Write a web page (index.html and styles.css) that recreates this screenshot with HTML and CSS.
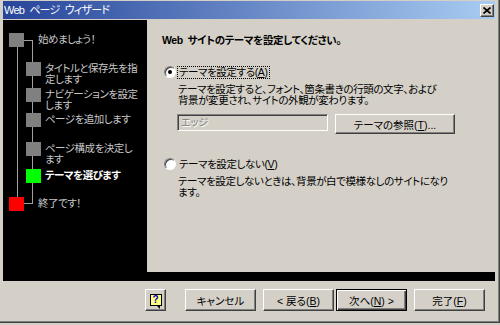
FILE: index.html
```html
<!DOCTYPE html>
<html lang="ja">
<head>
    <meta charset="UTF-8">
    <meta name="viewport" content="width=device-width, initial-scale=1.0">
    <title>Web ページ ウィザード</title>
    <link rel="stylesheet" href="styles.css">
</head>
<body>
    <div class="window">
        <div class="titlebar">
            <span class="title">Web ページ ウィザード</span>
            <button class="close-btn">
                <svg width="8" height="7" viewBox="0 0 8 7"><path d="M0.5 0.5L7.5 6.5M7.5 0.5L0.5 6.5" stroke="#000" stroke-width="1.7"/></svg>
            </button>
        </div>

        <div class="main">
            <div class="steps">
                <div class="tree-line outer"></div>
                <div class="tree-line inner"></div>
                <ul class="step-list">
                    <li class="step top"><span class="box"></span><span class="label">始めましょう！</span></li>
                    <li class="step sub"><span class="box"></span><span class="label">タイトルと保存先を指<br>定します</span></li>
                    <li class="step sub"><span class="box"></span><span class="label">ナビゲーションを設定<br>します</span></li>
                    <li class="step sub"><span class="box"></span><span class="label">ページを追加します</span></li>
                    <li class="step sub"><span class="box"></span><span class="label">ページ構成を決定し<br>ます</span></li>
                    <li class="step sub current"><span class="box green"></span><span class="label">テーマを選びます</span></li>
                    <li class="step top"><span class="box red"></span><span class="label">終了です！</span></li>
                </ul>
            </div>

            <div class="content">
                <h1 class="heading">Web サイトのテーマを設定してください。</h1>

                <label class="radio-row first">
                    <span class="radio checked"></span>
                    <span class="radio-text focused">テーマを設定する(<u>A</u>)</span>
                </label>
                <p class="desc">テーマを設定すると、フォント、箇条書きの行頭の文字、および<br>背景が変更され、サイトの外観が変わります。</p>

                <div class="theme-row">
                    <div class="textbox">エッジ</div>
                    <button class="btn browse">テーマの参照(<u>T</u>)...</button>
                </div>

                <label class="radio-row second">
                    <span class="radio"></span>
                    <span class="radio-text">テーマを設定しない(<u>V</u>)</span>
                </label>
                <p class="desc">テーマを設定しないときは、背景が白で模様なしのサイトになり<br>ます。</p>
            </div>
        </div>

        <div class="footer">
            <button class="btn help"><span class="help-icon">?</span></button>
            <button class="btn">キャンセル</button>
            <div class="nav-group">
                <button class="btn">&lt; 戻る(<u>B</u>)</button>
                <button class="btn default">次へ(<u>N</u>) &gt;</button>
            </div>
            <button class="btn">完了(<u>F</u>)</button>
        </div>
    </div>
</body>
</html>
```

FILE: styles.css
```css
* {
    margin: 0;
    padding: 0;
    box-sizing: border-box;
}

body {
    background-color: #d4d0c8;
    font-family: "Liberation Sans", "Noto Sans CJK JP", sans-serif;
    font-size: 10.5px;
    font-feature-settings: "palt";
    color: #000;
}

.window {
    width: 500px;
    height: 323px;
    padding: 1px 4px 0 3px;
    border-right: 1px solid #404040;
    border-bottom: 1px solid #404040;
    box-shadow: inset -1px -1px #808080;
    display: flex;
    flex-direction: column;
}

.titlebar {
    height: 18px;
    margin-bottom: 1px;
    padding: 0 1px 0 1px;
    display: flex;
    align-items: center;
    justify-content: space-between;
    background: linear-gradient(to right, #26449a, #a8ccf2);
    color: #fff;
}

.title {
    font-size: 11px;
    letter-spacing: -0.8px;
    word-spacing: 3px;
    line-height: 18px;
}

.close-btn {
    width: 14px;
    height: 13px;
    display: flex;
    align-items: center;
    justify-content: center;
    background-color: #d4d0c8;
    border: 1px solid;
    border-color: #fff #404040 #404040 #fff;
    box-shadow: inset -1px -1px #808080;
}

.main {
    height: 261px;
    display: flex;
    background-color: #000;
    padding-bottom: 9px;
}

/* step tree on the left */
.steps {
    width: 144px;
    position: relative;
    padding-top: 13px;
}

.tree-line {
    position: absolute;
}

.tree-line.outer {
    left: 14px;
    top: 27px;
    width: 1px;
    height: 150px;
    background-color: #a0a0a0;
}

.tree-line.inner {
    left: 21px;
    top: 20px;
    width: 9px;
    height: 164px;
    border: 1px solid #a0a0a0;
    border-left: none;
}

.step-list {
    list-style: none;
    display: grid;
    grid-template-rows: 29px 26px 25px 29px 27px 28px 14px;
}

.step {
    display: flex;
    align-items: flex-start;
    color: #c8c8c8;
}

.box {
    position: relative;
    flex: none;
    width: 15px;
    height: 14px;
    background-color: #808080;
}

.box.green {
    background-color: #00ff00;
}

.box.red {
    background-color: #ff0000;
}

.step.top .box {
    margin-left: 6px;
    margin-right: 14px;
}

.step.sub .box {
    margin-left: 23px;
    margin-right: 4px;
}

.label {
    padding-top: 1px;
    line-height: 11px;
    letter-spacing: -0.5px;
    white-space: nowrap;
}

.step.current .label {
    color: #fff;
    font-weight: bold;
}

/* right content */
.content {
    flex: 1;
    background-color: #d4d0c8;
    padding: 14px 0 0 15px;
}

.heading {
    font-size: 10.5px;
    font-weight: bold;
    line-height: 12px;
    letter-spacing: -0.35px;
    word-spacing: 2px;
}

.radio-row {
    height: 12px;
    display: flex;
    align-items: center;
}

.radio-row.first {
    margin-top: 20px;
}

.radio-row.second {
    margin-top: 24px;
}

.radio {
    position: relative;
    width: 12px;
    height: 12px;
    margin-left: 2px;
    margin-right: 2px;
    border-radius: 50%;
    background-color: #fff;
    border: 1px solid;
    border-color: #808080 #fff #fff #808080;
    box-shadow: inset 1px 1px #404040;
}

.radio.checked::after {
    content: "";
    position: absolute;
    left: 3px;
    top: 3px;
    width: 4px;
    height: 4px;
    border-radius: 50%;
    background-color: #000;
}

.radio-text {
    padding: 0 1px;
    line-height: 11px;
    letter-spacing: -0.4px;
}

.radio-text.focused {
    outline: 1px dotted #000;
}

.desc {
    margin-top: 6px;
    margin-left: 16px;
    line-height: 11px;
    letter-spacing: -0.4px;
    white-space: nowrap;
}

.theme-row {
    display: flex;
    align-items: flex-start;
    gap: 7px;
    margin-top: 8px;
    margin-left: 15px;
}

.textbox {
    width: 151px;
    height: 17px;
    padding-left: 3px;
    line-height: 15px;
    font-size: 10px;
    color: #808080;
    text-shadow: 1px 1px #fff;
    border: 1px solid;
    border-color: #808080 #fff #fff #808080;
    box-shadow: inset 1px 1px #404040;
}

/* buttons */
.btn {
    width: 71px;
    height: 22px;
    font: inherit;
    color: #000;
    background-color: #d4d0c8;
    border: 1px solid;
    border-color: #fff #404040 #404040 #fff;
    box-shadow: inset -1px -1px #808080;
}

.btn.browse {
    width: 120px;
    height: 20px;
}

.btn.default {
    border: 1px solid #000;
    box-shadow: inset 1px 1px #fff, inset -1px -1px #404040, inset -2px -2px #808080;
}

.footer {
    display: flex;
    gap: 7px;
    padding-top: 8px;
    padding-left: 142px;
}

.nav-group {
    display: flex;
    gap: 2px;
}

.btn.help {
    width: 21px;
    margin-right: 12px;
    display: flex;
    align-items: center;
    justify-content: center;
}

.help-icon {
    position: relative;
    width: 12px;
    height: 12px;
    border: 1px solid #000;
    background-color: #ffff80;
    color: #0000c0;
    font-weight: bold;
    font-size: 10px;
    line-height: 10px;
    text-align: center;
}

.help-icon::after {
    content: "";
    position: absolute;
    right: 1px;
    bottom: -4px;
    border-left: 3px solid transparent;
    border-top: 3px solid #000;
}
```
